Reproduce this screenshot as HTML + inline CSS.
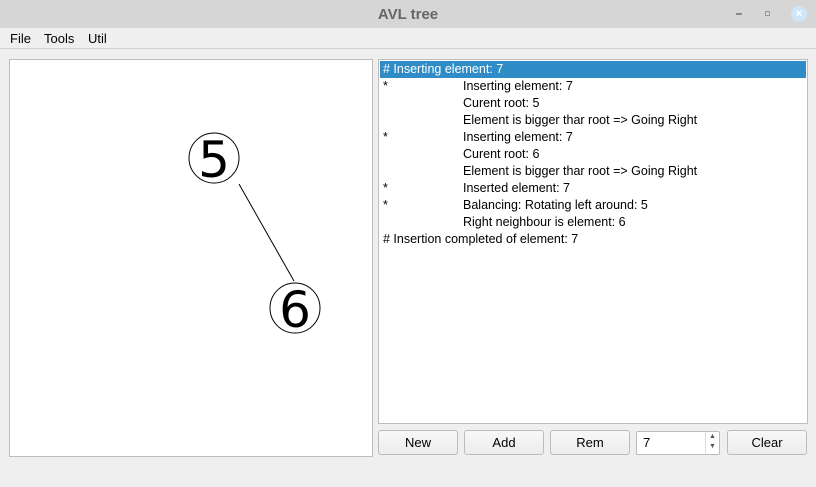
<!DOCTYPE html>
<html><head><meta charset="utf-8"><style>
*{margin:0;padding:0;box-sizing:border-box}
body{width:816px;height:487px;background:#efefef;font-family:"Liberation Sans",sans-serif;font-size:12.5px;color:#000;position:relative;overflow:hidden}
.title{position:absolute;left:0;top:0;width:816px;height:28px;background:#d6d6d6;text-align:center;line-height:30px;font-weight:bold;font-size:15px;color:#666}
.menu{position:absolute;top:28px;left:0;width:816px;height:21px;border-bottom:1px solid #d0d0d0}
.menu span{position:absolute;top:3px;font-size:13px}
.canvas{position:absolute;left:9px;top:59px;width:364px;height:398px;background:#fff;border:1px solid #bdbdbd}
.list{position:absolute;left:378px;top:59px;width:430px;height:365px;background:#fff;border:1px solid #bdbdbd}
.row{position:absolute;left:1px;width:426px;height:17px;line-height:17px;padding-left:3px;font-size:12.5px;white-space:nowrap}
.row b{font-weight:normal;position:absolute;left:83px}
.sel{background:#308cc6;color:#fff}
.btn{position:absolute;top:430px;height:25px;border:1px solid #bcbcbc;border-radius:3px;background:linear-gradient(#f8f8f8,#ececec);text-align:center;line-height:23px;font-size:13px}
</style></head><body>
<div class="title">AVL tree</div>
<div style="position:absolute;left:736px;top:13px;width:6px;height:2px;background:#888"></div>
<div style="position:absolute;left:765px;top:11px;width:5px;height:5px;border:1px solid #999"></div>
<div style="position:absolute;left:791px;top:6px;width:16px;height:16px;border-radius:50%;background:#cfe6f8;color:#fff;font-size:11px;text-align:center;line-height:16px;font-weight:bold">×</div>
<div class="menu"><span style="left:10px">File</span><span style="left:44px">Tools</span><span style="left:88px">Util</span></div>
<div class="canvas">
<svg width="364" height="398" style="position:absolute;left:-1px;top:-1px">
<line x1="230" y1="125" x2="285" y2="222" stroke="#000" stroke-width="1"/>
<circle cx="205" cy="99" r="25" fill="#fff" stroke="#000"/>
<circle cx="286" cy="249" r="25" fill="#fff" stroke="#000"/>
<text x="205" y="118" text-anchor="middle" font-family="DejaVu Sans,sans-serif" font-size="50">5</text>
<text x="286" y="268" text-anchor="middle" font-family="DejaVu Sans,sans-serif" font-size="50">6</text>
</svg></div>
<div class="list">
<div class="row sel" style="top:1px"># Inserting element: 7</div>
<div class="row" style="top:18px">*<b>Inserting element: 7</b></div>
<div class="row" style="top:35px"><b>Curent root: 5</b></div>
<div class="row" style="top:52px"><b>Element is bigger thar root =&gt; Going Right</b></div>
<div class="row" style="top:69px">*<b>Inserting element: 7</b></div>
<div class="row" style="top:86px"><b>Curent root: 6</b></div>
<div class="row" style="top:103px"><b>Element is bigger thar root =&gt; Going Right</b></div>
<div class="row" style="top:120px">*<b>Inserted element: 7</b></div>
<div class="row" style="top:137px">*<b>Balancing: Rotating left around: 5</b></div>
<div class="row" style="top:154px"><b>Right neighbour is element: 6</b></div>
<div class="row" style="top:171px"># Insertion completed of element: 7</div>
</div>
<div class="btn" style="left:378px;width:80px">New</div>
<div class="btn" style="left:464px;width:80px">Add</div>
<div class="btn" style="left:550px;width:80px">Rem</div>
<div style="position:absolute;left:636px;top:431px;width:84px;height:24px;background:#fff;border:1px solid #bcbcbc;border-radius:2px;line-height:22px;padding-left:6px;font-size:13px">7
<div style="position:absolute;right:0;top:0;width:14px;height:22px;border-left:1px solid #ddd;font-size:7px;line-height:10px;text-align:center;color:#555">▲<br>▼</div></div>
<div class="btn" style="left:727px;width:80px">Clear</div>
</body></html>
